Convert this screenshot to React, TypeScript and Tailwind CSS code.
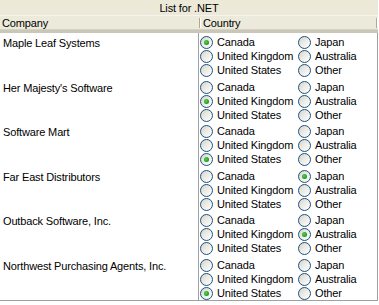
import React from "react";

const rows: { name: string; sel: number }[] = [
  { name: "Maple Leaf Systems", sel: 0 },
  { name: "Her Majesty's Software", sel: 1 },
  { name: "Software Mart", sel: 2 },
  { name: "Far East Distributors", sel: 3 },
  { name: "Outback Software, Inc.", sel: 4 },
  { name: "Northwest Purchasing Agents, Inc.", sel: 2 },
];

// order: Canada(0), UK(1), US(2), Japan(3), Australia(4), Other(5)
const col1 = [
  { label: "Canada", v: 0 },
  { label: "United Kingdom", v: 1 },
  { label: "United States", v: 2 },
];
const col2 = [
  { label: "Japan", v: 3 },
  { label: "Australia", v: 4 },
  { label: "Other", v: 5 },
];

function Radio({ checked, label }: { checked: boolean; label: string }) {
  return (
    <div className="flex h-[14px] items-center">
      <div className="relative h-[13px] w-[13px] shrink-0 rounded-full border border-[#1c5180] bg-[linear-gradient(135deg,#d3d2ca_0%,#ebeae4_45%,#ffffff_100%)]">
        {checked && (
          <div className="absolute left-[3px] top-[3px] h-[5px] w-[5px] rounded-full bg-[radial-gradient(circle_at_40%_40%,#55d455_0%,#21a121_60%,#1a8a1a_100%)]" />
        )}
      </div>
      <span className="ml-[4px] leading-[14px]">{label}</span>
    </div>
  );
}

export default function App() {
  return (
    <div
      className="w-[379px] h-[305px] bg-white text-black text-[11px] tracking-[-0.15px]"
      style={{ fontFamily: '"Liberation Sans", Arial, sans-serif' }}
    >
      <div className="w-[378px]">
        <div className="flex h-[16px] items-center justify-center bg-[#ece9d8] border-b border-[#f5f4ee]">
          <span className="leading-[14px]">List for .NET</span>
        </div>
        <div className="flex h-[17px] bg-[#ebeadb] border-b-[3px] border-[#cbc7b8] shadow-[inset_0_-1px_0_#d6d2c2]">
          <div className="flex w-[199px] items-center pl-[2px]">
            <span className="leading-[13px]">Company</span>
          </div>
          <div className="my-[2px] w-[1px] bg-[#aca899]" />
          <div className="my-[2px] w-[1px] bg-white" />
          <div className="flex flex-1 items-center pl-[2px]">
            <span className="leading-[13px]">Country</span>
          </div>
          <div className="my-[2px] w-[1px] bg-[#aca899]" />
          <div className="my-[2px] w-[1px] bg-white" />
        </div>
        <div className="border-r border-b border-[#a0a0a0]">
          {rows.map((r, i) => (
            <div
              key={r.name}
              className={`flex ${i % 2 === 0 ? "h-[45px]" : "h-[44px]"}`}
            >
              <div className="w-[199px] border-r border-[#a0a0a0] pl-[3px] pt-[2px]">
                <span className="leading-[14px]">{r.name}</span>
              </div>
              <div className="flex flex-1 pl-[1px] pt-[2px]">
                <div className="w-[98px]">
                  {col1.map((c) => (
                    <Radio key={c.label} label={c.label} checked={r.sel === c.v} />
                  ))}
                </div>
                <div>
                  {col2.map((c) => (
                    <Radio key={c.label} label={c.label} checked={r.sel === c.v} />
                  ))}
                </div>
              </div>
            </div>
          ))}
        </div>
      </div>
    </div>
  );
}
